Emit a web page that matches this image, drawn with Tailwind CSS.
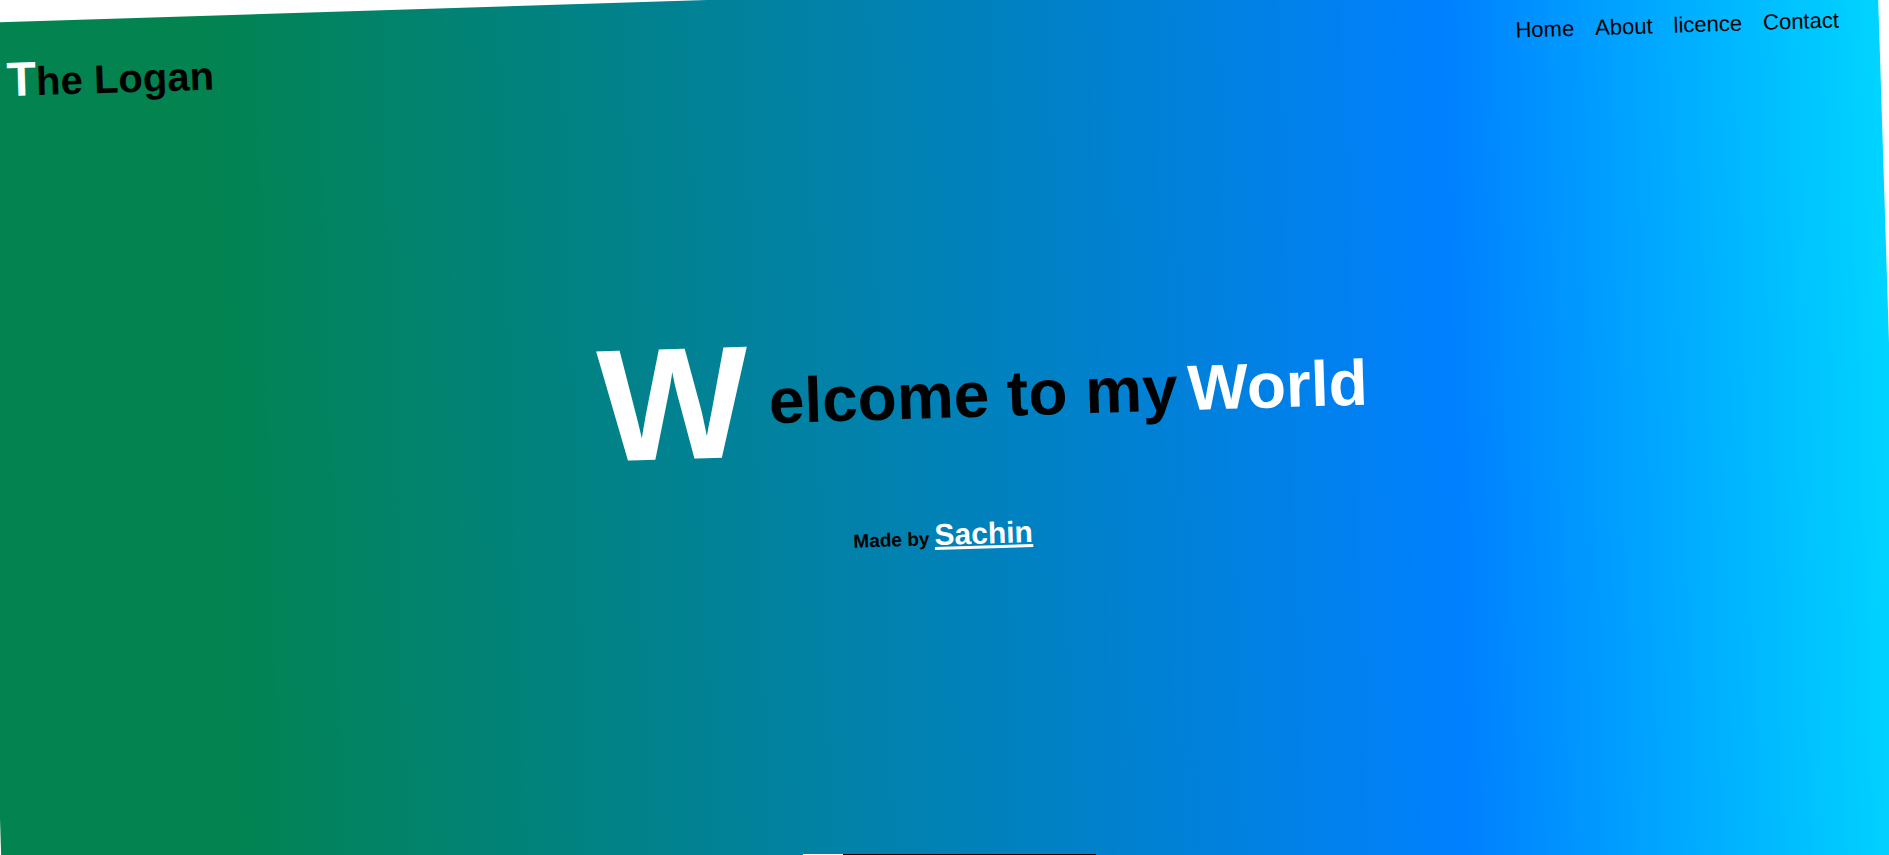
<!DOCTYPE html>
<html lang="en">
<head>
<meta charset="utf-8">
<title>The Logan</title>
<script src="https://cdn.jsdelivr.net/npm/@tailwindcss/browser@4"></script>
</head>
<body class="bg-white text-black font-['Liberation_Sans',Arial,sans-serif]">
<div class="relative h-screen overflow-hidden">
  <!-- Tilted page -->
  <div class="mt-[23px] -ml-[25px] min-h-[110vh] w-[calc(100%+14px)] origin-top-left -rotate-[1.8deg] bg-[linear-gradient(90deg,#028350_12%,#0080ff_77%,#00d4ff_100%)]">
    <header class="flex items-start justify-between pt-7 pr-10 pl-[30px]">
      <div class="text-[40px] leading-[60px] font-bold"><span class="text-[48px] text-white">T</span>he Logan</div>
      <nav class="mt-3 flex gap-[21px] text-[22px] leading-8">
        <a href="#home">Home</a>
        <a href="#about">About</a>
        <a href="#licence">licence</a>
        <a href="#contact">Contact</a>
      </nav>
    </header>
    <main class="mt-[233px]">
      <h1 class="flex items-center justify-center pl-22 text-[64px] leading-none font-bold">
        <span class="mr-5 text-[160px] text-white">W</span>
        <span class="mr-[10px]">elcome to my</span>
        <span class="text-white">World</span>
      </h1>
      <h3 class="mt-[39px] text-center text-[19px] leading-10 font-bold">Made by <a href="#sachin" class="text-[30px] text-white underline">Sachin</a></h3>
    </main>
  </div>
  <!-- Top edge of the section below the fold -->
  <div class="absolute bottom-0 left-[42.5%] flex h-px w-[15.5%] bg-black"><span class="w-10 bg-white"></span></div>
</div>
</body>
</html>
